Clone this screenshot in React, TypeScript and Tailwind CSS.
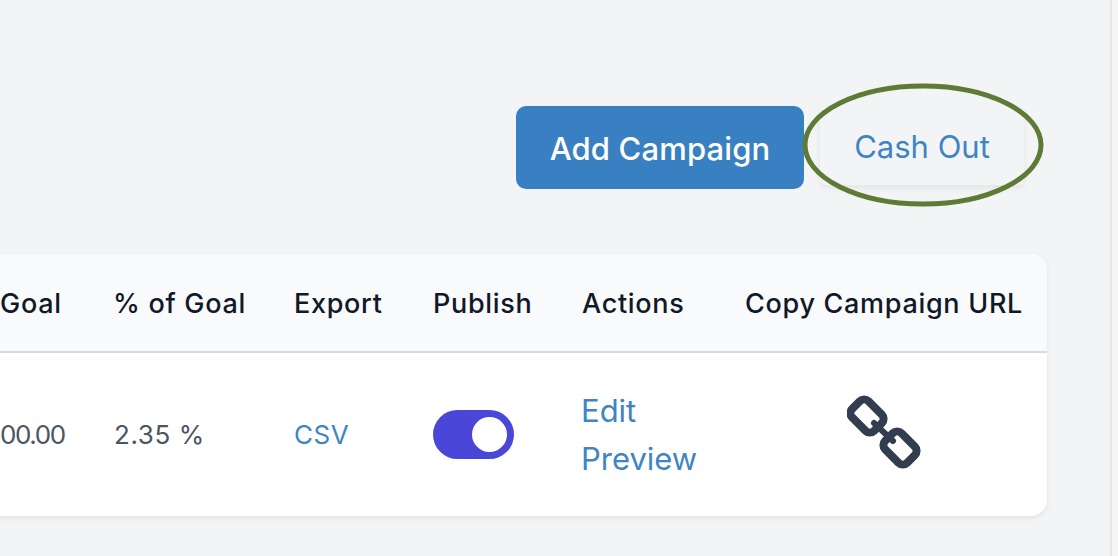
const font = { fontFamily: 'Inter, "Liberation Sans", sans-serif' }

function ChainIcon() {
  return (
    <svg width="74" height="74" viewBox="0 0 74 74" fill="none" stroke="#333d50" strokeWidth="8">
      <rect x="4.5" y="9.5" width="31" height="23" rx="6" transform="rotate(45 20 21)" />
      <rect x="37.5" y="41.5" width="31" height="23" rx="6" transform="rotate(45 53 53)" />
      <path d="M27 28 L46 46" strokeWidth="6" strokeLinecap="round" />
    </svg>
  )
}

export default function App() {
  return (
    <div className="flex h-[556px] w-[1118px] overflow-hidden bg-[#f3f4f6]" style={font}>
      <main className="relative w-[1112px] border-r-2 border-[#e5e7eb] pt-[106px]">
        {/* annotation round the button */}
        <svg className="absolute left-[800px] top-[82px]" width="246" height="126" fill="none">
          <ellipse cx="123" cy="63" rx="118" ry="59" stroke="#5d7b34" strokeWidth="5" />
        </svg>

        <div className="flex items-start justify-end gap-4 pr-[86px]">
          <button className="h-[83px] w-[288px] rounded-[10px] bg-[#3880c1] pt-[3px] text-[31px] font-medium tracking-[0.15px] text-white">
            Add Campaign
          </button>
          <button className="h-[79px] w-[204px] rounded-[6px] pt-[3px] text-[31px] text-[#3f84c4] shadow-[0_3px_6px_rgba(0,0,0,0.07)]">
            Cash Out
          </button>
        </div>

        <div className="-ml-5 mt-[65px] w-[1067px] overflow-hidden rounded-[16px] bg-white shadow-[0_2px_5px_rgba(0,0,0,0.08)]">
          <div className="grid h-[99px] grid-cols-[109px_180px_139px_149px_163px_327px] items-center border-b-2 border-[#d5d9e0] bg-[#f9fafb] pt-[3px] text-[27px] font-medium tracking-[0.7px] text-[#111827]">
            <div className="pl-[20px]">Goal</div>
            <div className="pl-[24px]">% of Goal</div>
            <div className="pl-[25px]">Export</div>
            <div className="pl-[25px]">Publish</div>
            <div className="pl-[25px]">Actions</div>
            <div className="pl-[25px]">Copy Campaign URL</div>
          </div>
          <div className="grid h-[163px] grid-cols-[109px_180px_139px_149px_163px_327px] items-center text-[26px] tracking-[0.6px] text-[#4b5563]">
            <div className="pl-[20px] tracking-[-1.4px]">00.00</div>
            <div className="pl-[25px]">2.35 %</div>
            <div className="pl-[25px] text-[#3f84c4]">CSV</div>
            <div className="pl-[25px]">
              <div className="flex h-[49px] w-[81px] items-center justify-end rounded-full bg-[#4a46d8] pr-[7px]">
                <div className="h-[35px] w-[35px] rounded-full bg-white" />
              </div>
            </div>
            <div className="flex flex-col pl-[24px] text-[31px] leading-[48px] tracking-normal text-[#3f84c4]">
              <span>Edit</span>
              <span>Preview</span>
            </div>
            <div className="flex justify-center pb-[6px]">
              <ChainIcon />
            </div>
          </div>
        </div>
      </main>
      <div className="flex-1 bg-[#f5f5f6]" />
    </div>
  )
}
